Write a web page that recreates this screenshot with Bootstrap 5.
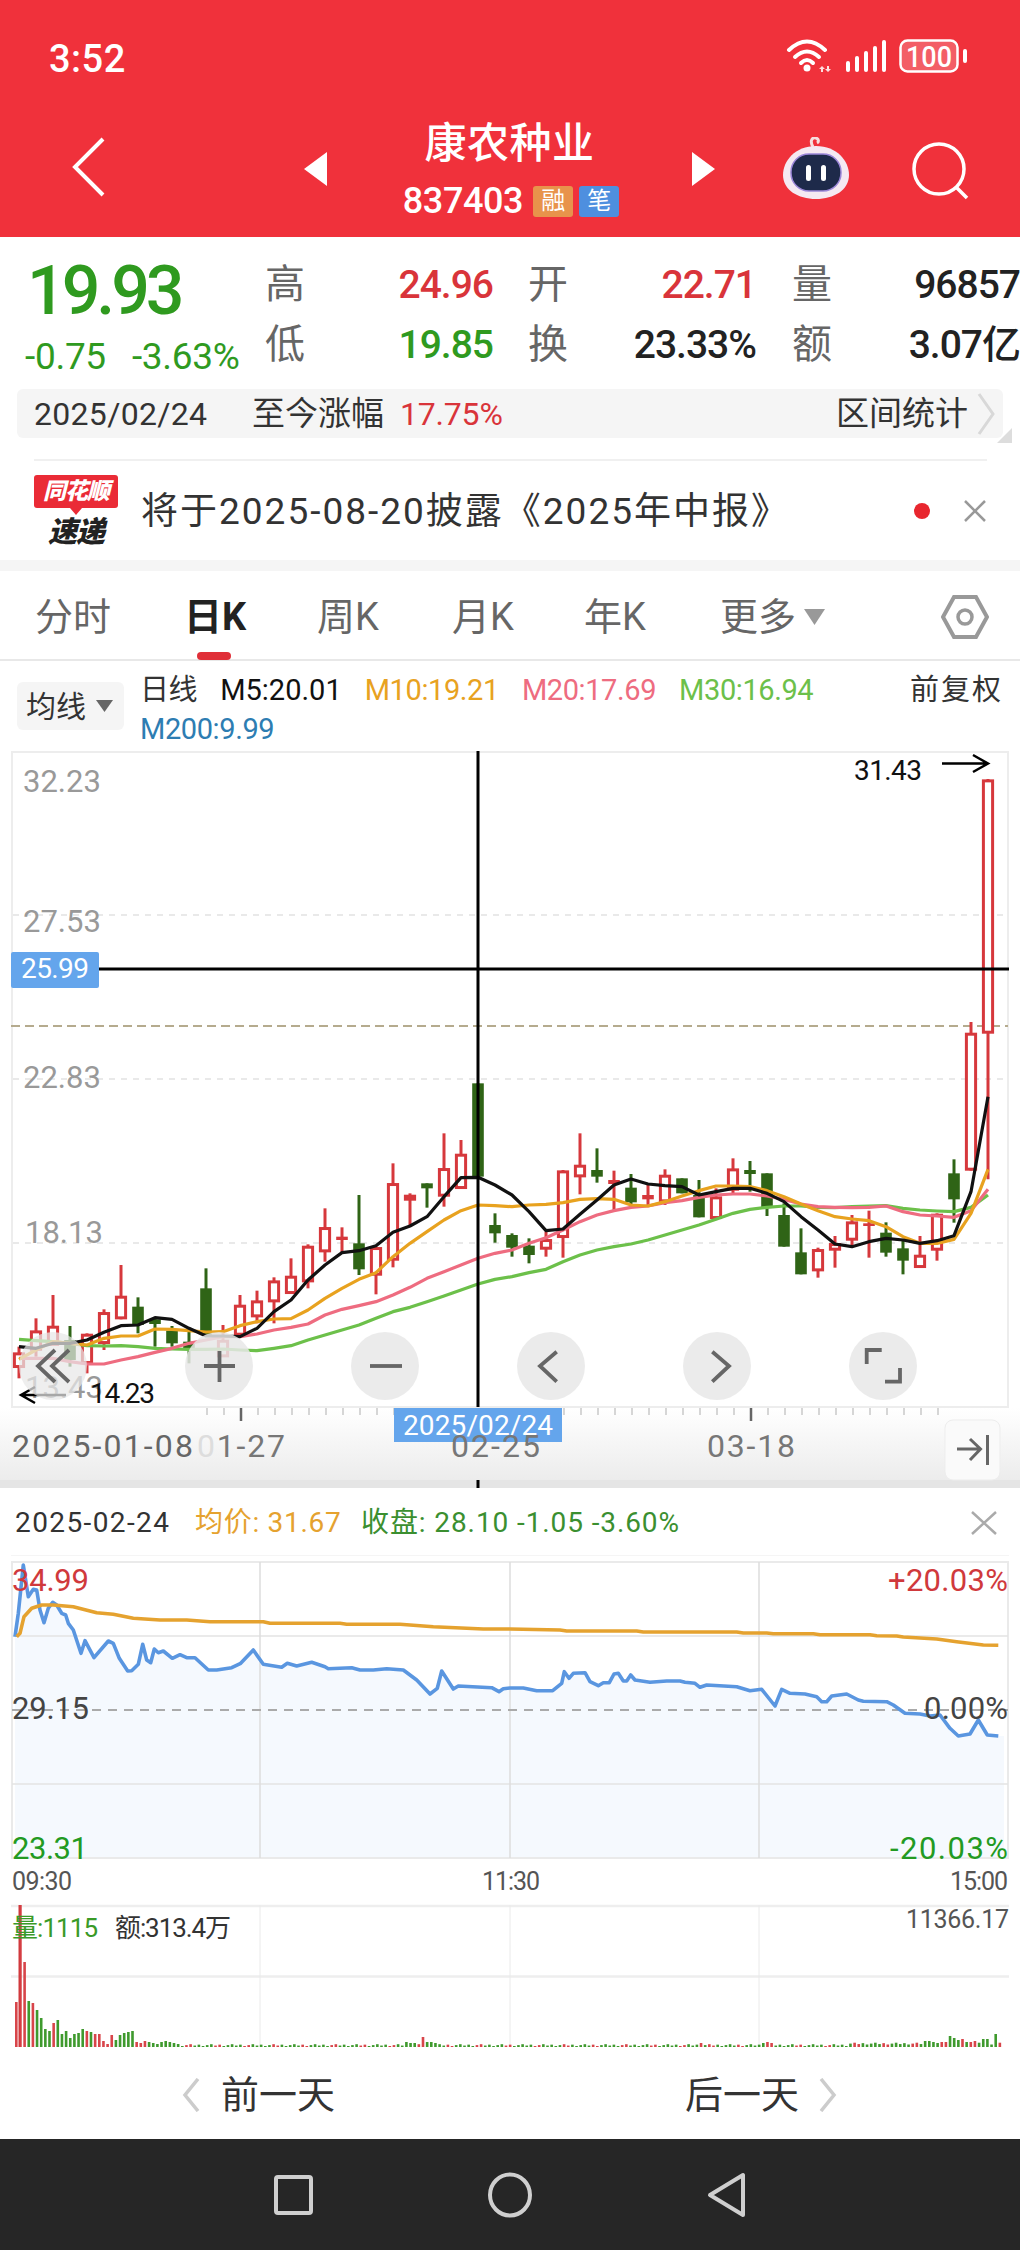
<!DOCTYPE html>
<html lang="zh">
<head>
<meta charset="utf-8">
<title>康农种业</title>
<link href="https://cdn.jsdelivr.net/npm/bootstrap@5.3.0/dist/css/bootstrap.min.css" rel="stylesheet">
<style>
html,body{margin:0;background:#fff}
body{width:1020px;height:2250px;overflow:hidden;font-family:Roboto,"Noto Sans CJK SC",sans-serif;color:#333}
svg{display:block}
svg text{font-family:Roboto,"Noto Sans CJK SC",sans-serif}
.app-head{height:237px;background:#F0313B;color:#fff}
.stat-row{height:117px;padding:37px 52px 0 49px}
.stat-time{font-size:38px;line-height:44px;letter-spacing:.5px;font-weight:500}
.nav-row{height:120px}
.nav-back{width:33px;margin-left:72px;margin-top:20px}
.tri-l{margin-left:199px;margin-top:35px}
.nav-mid{width:365px;text-align:center}
.stk-name{font-size:42px;line-height:46px;font-weight:500;margin-top:4px;letter-spacing:.5px}
.stk-code{font-size:36px;line-height:40px;gap:6px;margin-top:14px;margin-left:3px;font-weight:500}
.stk-code>span:first-child{letter-spacing:-.4px}
.stk-tag{width:40px;height:31px;border-radius:3px;font-size:24px;line-height:30px;font-weight:400}
.tag-rong{background:#E8934B}
.tag-bi{background:#4E8FDF}
.tri-r{margin-top:35px}
.robot{margin-left:67px;margin-top:20px}
.srch{margin-left:62px;margin-top:25px}
.quote-grid{height:152px;display:grid;grid-template-columns:265px 40px 188px 35px 40px 188px 36px 40px 188px;grid-template-rows:60px 59px;padding-top:18px;align-items:center}
.px-left{grid-row:1 / span 2;padding-left:25px;padding-top:6px}
.px-big{font-size:68px;line-height:70px;font-weight:500;letter-spacing:-4px;color:#2F9A1F;margin-left:2px;margin-top:-3px}
.px-sub{font-size:37px;line-height:40px;letter-spacing:-.3px;color:#2F9A1F;margin-top:11px;gap:26px}
.q-lbl{font-size:40px;line-height:46px;color:#666}
.q-val{font-size:39px;line-height:46px;letter-spacing:-1px;text-align:right;color:#222;font-weight:500}
.c-up{color:#D9343A}
.c-dn{color:#2F9A1F}
.date-bar{height:49px;margin:0 17px;background:#F5F5F5;border-radius:6px;padding:0 7px 0 17px;position:relative}
.date-bar::after{content:"";position:absolute;right:-9px;bottom:-5px;border-style:solid;border-width:0 0 15px 15px;border-color:transparent transparent #ddd transparent}
.db-date{font-size:32px;width:218px;letter-spacing:.3px}
.db-cap{font-size:33px;width:148px;white-space:nowrap}
.db-pct{font-size:32px;letter-spacing:-.2px}
.db-more{font-size:33px;color:#333}
.news-wrap{margin-top:21px;height:101px;margin-left:34px;margin-right:33px;border-top:2px solid #F0F0F0}
.logo-box{width:84px;margin-top:14px}
.logo-top{background:#EA2B36;color:#fff;font-size:23px;line-height:33px;height:33px;font-weight:900;font-style:italic;text-align:center;border-radius:3px;letter-spacing:-1px;position:relative}
.logo-top::after{content:"";position:absolute;left:36px;top:33px;border-style:solid;border-width:7px 6px 0 6px;border-color:#EA2B36 transparent transparent transparent}
.logo-bot{font-size:29px;line-height:32px;margin-top:8px;font-weight:900;font-style:italic;color:#222;text-align:center;letter-spacing:-1px}
.news-txt{font-size:37px;letter-spacing:2px;margin-left:23px;color:#333;white-space:nowrap;line-height:100px;margin-top:1px}
.news-dot{width:16px;height:16px;border-radius:50%;background:#E8262E;margin-right:33px}
.band{height:11px;background:#F5F5F5}
.tab-bar{height:90px;border-bottom:2px solid #E8E8E8;padding-left:35px;padding-top:4px}
.tab-item{font-size:38px;color:#666;line-height:44px;white-space:nowrap;position:relative}
.tab-item.on{font-weight:700;color:#222}
.tab-item.on::after{content:"";position:absolute;left:13px;bottom:-21px;width:34px;height:8px;border-radius:4px;background:#E02F38}
.t1{width:149px}.t2{width:133px}.t3{width:135px}.t4{width:132px}.t5{width:136px}.t6{width:221px}
.ma-row{height:84px}
.ma-btn{width:107px;height:48px;margin:21px 0 0 17px;background:#F5F5F5;border-radius:6px;font-size:30px;gap:10px;padding-left:9px;color:#333}
.ma-legend{width:720px;margin-left:16px;padding-top:10px;column-gap:23px;font-size:29px;line-height:39px}
.ma-legend span{white-space:nowrap;letter-spacing:-.4px}
.ma-legend .m5{letter-spacing:0}
.m5{color:#111}.m10{color:#E8A21F}.m20{color:#EE6C80}.m30{color:#6CC04A}.m200{color:#2D7DB2}
.ma-fq{font-size:29px;line-height:39px;margin-left:auto;margin-right:17px;margin-top:10px;letter-spacing:2px}
.day-head{height:67px;padding:2px 23px 0 15px;font-size:28px;letter-spacing:.7px}
.dh-date{width:180px;color:#333;letter-spacing:1.4px}
.dh-avg{width:166px;color:#E5A22F;white-space:nowrap}
.dh-close{color:#3B8F30;white-space:nowrap;letter-spacing:.9px}
.day-foot{height:92px;padding-top:4px}
.df-l{margin-left:182px;gap:21px}
.df-r{margin-left:auto;margin-right:183px;gap:20px}
.df-txt{font-size:38px;color:#333;line-height:42px}
.sys-nav{height:111px;background:#262626}
</style>
</head>
<body>
<header class="app-head">
  <div class="stat-row d-flex justify-content-between align-items-start">
    <div class="stat-time">3:52</div>
    <svg width="182" height="40" viewBox="787 40 182 40">
      <g fill="none" stroke="#fff" stroke-width="4" stroke-linecap="round">
        <path d="M790 53Q808 36 826 53"/><path d="M796 60Q808 49 820 60"/><path d="M802 66Q808 60 814 66"/>
      </g>
      <circle cx="808" cy="71" r="3.5" fill="#fff"/>
      <g fill="#fff">
        <path d="M823 69l-3 3h2v3h2v-3h2z M829 75l3-3h-2v-3h-2v3h-2z" opacity=".85"/>
        <rect x="847" y="64" width="4" height="11" rx="2"/><rect x="856" y="59" width="4" height="16" rx="2"/><rect x="865" y="54" width="4" height="21" rx="2"/><rect x="874" y="49" width="4" height="26" rx="2"/><rect x="883" y="43" width="4" height="32" rx="2"/>
      </g>
      <rect x="901.5" y="43.5" width="57" height="31" rx="7" fill="#fff" fill-opacity=".22" stroke="#fff" stroke-width="2.5"/>
      <text x="930" y="70" font-size="29" font-weight="500" fill="#fff" text-anchor="middle" textLength="46" lengthAdjust="spacingAndGlyphs">100</text>
      <rect x="964" y="52" width="4" height="14" rx="2" fill="#fff"/>
    </svg>
  </div>
  <div class="nav-row d-flex align-items-start">
    <svg class="nav-back" width="33" height="60" viewBox="0 0 33 60"><path d="M31 2L3 30l28 28" fill="none" stroke="#fff" stroke-width="4"/></svg>
    <svg class="tri-l" width="23" height="34" viewBox="0 0 23 34"><path d="M23 0L0 17l23 17z" fill="#fff"/></svg>
    <div class="nav-mid">
      <div class="stk-name">康农种业</div>
      <div class="stk-code d-flex justify-content-center align-items-center">
        <span>837403</span>
        <span class="stk-tag tag-rong ms-1">融</span><span class="stk-tag tag-bi">笔</span>
      </div>
    </div>
    <svg class="tri-r" width="23" height="34" viewBox="0 0 23 34"><path d="M0 0l23 17L0 34z" fill="#fff"/></svg>
    <svg class="robot" width="68" height="62" viewBox="0 0 68 62">
      <path d="M31 10C27 3 31 0 34 1s3 4 1 5" fill="none" stroke="#f6dede" stroke-width="3"/>
      <path d="M34 9C55 9 67 24 67 38C67 53 52 62 34 62S1 53 1 38C1 24 13 9 34 9Z" fill="#F5E9F2"/>
      <rect x="9" y="17" width="50" height="37" rx="18" fill="#1E2A4A" stroke="#9B86D8" stroke-width="1.5"/>
      <rect x="24" y="28" width="5" height="16" rx="2.500" fill="#fff"/><rect x="39" y="28" width="5" height="16" rx="2.500" fill="#fff"/>
    </svg>
    <svg class="srch" width="58" height="58" viewBox="0 0 58 58"><ellipse cx="27" cy="27" rx="25" ry="25" fill="none" stroke="#fff" stroke-width="3.5"/><path d="M44 45l11 11" stroke="#fff" stroke-width="3.5"/></svg>
  </div>
</header>

<section class="quote-grid">
  <div class="px-left">
    <div class="px-big">19.93</div>
    <div class="px-sub d-flex"><span>-0.75</span><span>-3.63%</span></div>
  </div>
  <div class="q-lbl">高</div><div class="q-val c-up">24.96</div><div></div>
  <div class="q-lbl">开</div><div class="q-val c-up">22.71</div><div></div>
  <div class="q-lbl">量</div><div class="q-val">96857</div>
  <div class="q-lbl">低</div><div class="q-val c-dn">19.85</div><div></div>
  <div class="q-lbl">换</div><div class="q-val">23.33%</div><div></div>
  <div class="q-lbl">额</div><div class="q-val">3.07亿</div>
</section>

<div class="date-bar d-flex align-items-center">
  <span class="db-date">2025/02/24</span>
  <span class="db-cap">至今涨幅</span>
  <span class="db-pct c-up">17.75%</span>
  <span class="db-more ms-auto me-2">区间统计</span>
  <svg width="20" height="46" viewBox="0 0 20 46"><path d="M3 3l14 20L3 43" fill="none" stroke="#D8D8D8" stroke-width="3"/></svg>
</div>

<div class="news-wrap d-flex align-items-start">
  <div class="logo-box">
    <div class="logo-top">同花顺</div>
    <div class="logo-bot">速递</div>
  </div>
  <div class="news-txt">将于2025-08-20披露《2025年中报》</div>
  <div class="ms-auto d-flex align-items-center h-100">
    <div class="news-dot"></div>
    <svg width="24" height="22" viewBox="0 0 24 22"><path d="M2 1l20 20M22 1L2 21" stroke="#999" stroke-width="2.5"/></svg>
  </div>
</div>
<div class="band"></div>

<nav class="tab-bar d-flex align-items-center">
  <div class="tab-item t1">分时</div>
  <div class="tab-item t2 on"><span>日K</span></div>
  <div class="tab-item t3">周K</div>
  <div class="tab-item t4">月K</div>
  <div class="tab-item t5">年K</div>
  <div class="tab-item t6 d-flex align-items-center gap-2">更多
    <svg width="21" height="16" viewBox="0 0 21 16"><path d="M0 0h21L10.500 16z" fill="#999"/></svg>
  </div>
  <svg width="48" height="46" viewBox="0 0 48 46"><path d="M2 23L13 3h22l11 20-11 20H13z" fill="none" stroke="#999" stroke-width="4"/><circle cx="24" cy="23" r="7" fill="none" stroke="#999" stroke-width="3.500"/></svg>
</nav>

<div class="ma-row d-flex align-items-start">
  <div class="ma-btn d-flex align-items-center">均线
    <svg width="17" height="12" viewBox="0 0 17 12"><path d="M0 0h17L8.500 12z" fill="#666"/></svg>
  </div>
  <div class="ma-legend d-flex flex-wrap">
    <span>日线</span><span class="m5">M5:20.01</span><span class="m10">M10:19.21</span><span class="m20">M20:17.69</span><span class="m30">M30:16.94</span><span class="m200">M200:9.99</span>
  </div>
  <div class="ma-fq">前复权</div>
</div>

<svg id="kchart" width="1020" height="743" viewBox="0 745 1020 743">
  <defs><linearGradient id="fade" x1="0" y1="0" x2="0" y2="1"><stop offset="0" stop-color="#fff"/><stop offset="1" stop-color="#ECECEC"/></linearGradient></defs>
  <rect x="0" y="1408" width="1020" height="72" fill="url(#fade)"/>
  <rect x="0" y="1480" width="1020" height="8" fill="#E5E5E5"/>
  <rect x="12" y="752" width="996" height="655" fill="#fff" stroke="#EDEDED" stroke-width="2"/>
  <g stroke="#E2E2E2" stroke-width="1.500" stroke-dasharray="6 6"><path d="M13 915H1007M13 1079H1007M13 1243H1007"/></g>
  <g fill="#999" font-size="31">
    <text x="23" y="792">32.23</text><text x="23" y="932">27.53</text><text x="23" y="1088">22.83</text><text x="25" y="1243">18.13</text><text x="25" y="1398">13.43</text>
  </g>
  <path d="M11 1026H1008" stroke="#B5AB8E" stroke-width="2" stroke-dasharray="9 5"/>
  <g id="ticks"></g>
  <g id="candles"></g>
  <g id="mas" fill="none" stroke-width="3.200" stroke-linejoin="round"></g>
  <path d="M478 751V1407M478 1480V1488" stroke="#000" stroke-width="3"/>
  <path d="M99 969H1009" stroke="#000" stroke-width="3"/>
  <rect x="11" y="952" width="88" height="36" rx="2" fill="#64A5EC"/>
  <text x="21" y="978" fill="#fff" font-size="28" textLength="68">25.99</text>
  <text x="854" y="780" fill="#111" font-size="28" textLength="68">31.43</text>
  <path d="M942 763.500H988M973 755l15 8.500-15 8.500" fill="none" stroke="#000" stroke-width="2.500"/>
  <text x="90" y="1403" fill="#111" font-size="28" textLength="65">14.23</text>
  <path d="M66 1395H21M35 1387l-14 8 14 8" fill="none" stroke="#000" stroke-width="2.500"/>
  <circle cx="53" cy="1366" r="34" fill="#E8E8E8" fill-opacity=".72"/>
  <g fill="#E8E8E8" fill-opacity=".85">
    <circle cx="219" cy="1366" r="34"/><circle cx="385" cy="1366" r="34"/><circle cx="551" cy="1366" r="34"/><circle cx="717" cy="1366" r="34"/><circle cx="883" cy="1366" r="34"/>
  </g>
  <g fill="none" stroke="#666" stroke-width="3.800">
    <path d="M55 1350l-17 16 17 16M69 1350l-17 16 17 16"/>
    <path d="M204 1366h31M219.500 1351v31"/>
    <path d="M370 1366h32"/>
    <path d="M556.700 1351.700L540 1366l16.700 15.700"/>
    <path d="M712.300 1351.700L729 1366l-16.700 15.700"/>
    <path d="M866.700 1364v-14h15M885 1381.700h15V1368"/>
  </g>
  <rect x="394" y="1408" width="168" height="34" fill="#64A5EC"/>
  <text x="403" y="1435" fill="#fff" font-size="28" textLength="150">2025/02/24</text>
  <g font-size="32" fill="#777">
    <text x="12" y="1457" textLength="181" fill="#666">2025-01-08</text>
    <text x="197" y="1457" textLength="88"><tspan fill="#DDD">0</tspan>1-27</text>
    <text x="451" y="1457" textLength="89">02-25</text>
    <text x="707" y="1457" textLength="88">03-18</text>
  </g>
  <rect x="945" y="1420" width="55" height="60" rx="8" fill="#FAFAFA" stroke="#EDEDED"/>
  <path d="M957 1449h22M970 1439l10.500 10-10.500 11M987.500 1435v30" fill="none" stroke="#666" stroke-width="3"/>
</svg>

<div class="day-head d-flex align-items-center">
  <span class="dh-date">2025-02-24</span>
  <span class="dh-avg">均价: 31.67</span>
  <span class="dh-close">收盘: 28.10 -1.05 -3.60%</span>
  <svg class="ms-auto" width="26" height="24" viewBox="0 0 26 24"><path d="M1 1l24 22M25 1L1 23" stroke="#AAA" stroke-width="2.500"/></svg>
</div>

<svg id="day" width="1020" height="492" viewBox="0 1555 1020 492">
  <path d="M11 1555.500H1009" stroke="#F5F5F5"/>
  <path id="dayfill" fill="#F5F9FE"/>
  <rect x="12" y="1562" width="996" height="296" fill="none" stroke="#EAEAEA" stroke-width="2"/>
  <path d="M12 1636H1008M12 1784H1008" stroke="#E4E4E4" stroke-width="1.500"/>
  <path d="M260 1562V1858M510 1562V1858M759 1562V1858" stroke="#DDD" stroke-width="1.500"/>
  <path d="M12 1710H1008" stroke="#AAA" stroke-width="2" stroke-dasharray="9 7"/>
  <polyline id="dayline" fill="none" stroke="#5A96E0" stroke-width="3.600" stroke-linejoin="round"/>
  <polyline id="dayavg" fill="none" stroke="#E5A22F" stroke-width="3.600" stroke-linejoin="round"/>
  <g font-size="31">
    <text x="12" y="1591" fill="#D0393C" textLength="77">34.99</text>
    <text x="12" y="1719" fill="#444" textLength="77">29.15</text>
    <text x="12" y="1859" fill="#229A22" textLength="76">23.31</text>
    <text x="888" y="1591" fill="#D0393C" textLength="120">+20.03%</text>
    <text x="924" y="1719" fill="#444" textLength="84">0.00%</text>
    <text x="890" y="1859" fill="#229A22" textLength="118">-20.03%</text>
  </g>
  <g font-size="25" fill="#555">
    <text x="12" y="1890" textLength="60">09:30</text>
    <text x="482" y="1890" textLength="58">11:30</text>
    <text x="950" y="1890" textLength="58">15:00</text>
  </g>
  <path d="M11 1906H1009M11 1976.500H1009" stroke="#EEE" stroke-width="2.500"/>
  <path d="M260 1905V2047M510 1905V2047M759 1905V2047" stroke="#EAEAEA"/>
  <g id="vols"></g>
  <path d="M19.500 1905V2047" stroke="#D0393C" stroke-width="2"/>
  <text x="12" y="1937" font-size="26" fill="#3A9A28" textLength="86">量:1115</text>
  <text x="115" y="1937" font-size="26" fill="#333" textLength="116">额:313.4万</text>
  <text x="906" y="1928" font-size="25" fill="#555" textLength="103">11366.17</text>
</svg>

<footer class="day-foot d-flex align-items-center">
  <div class="df-l d-flex align-items-center">
    <svg width="18" height="34" viewBox="0 0 18 34"><path d="M16 1L3 17l13 16" fill="none" stroke="#CCC" stroke-width="3.500"/></svg>
    <span class="df-txt">前一天</span>
  </div>
  <div class="df-r d-flex align-items-center">
    <span class="df-txt">后一天</span>
    <svg width="18" height="34" viewBox="0 0 18 34"><path d="M2 1l13 16L2 33" fill="none" stroke="#CCC" stroke-width="3.500"/></svg>
  </div>
</footer>

<div class="sys-nav d-flex align-items-center justify-content-center">
  <svg width="480" height="50" viewBox="270 2170 480 50" fill="none" stroke="#CFCFCF" stroke-width="4" stroke-linejoin="round">
    <rect x="276" y="2177" width="35" height="36" rx="2"/>
    <ellipse cx="510" cy="2195" rx="20" ry="20.500"/>
    <path d="M743 2175v40l-33-20z"/>
  </svg>
</div>

<script>
(function(){
  var NS='http://www.w3.org/2000/svg';
  function el(p,n,a){var e=document.createElementNS(NS,n);for(var k in a)e.setAttribute(k,a[k]);p.appendChild(e);return e;}
  var R='#D6383C',G='#2F6416',X0=19;
  var c=[['r',800,895,818,862],['r',715,830,752,810],['r',645,790,738,795],['g',738,860,780,840],['r',760,880,762,850],['r',688,810,697,790],['r',555,718,648,716],['g',652,760,680,735],['g',715,800,718,732],['g',738,800,752,790],['g',755,850,785,805],['g',565,770,625,765],['r',735,830,780,830],['r',645,770,675,765],['r',632,730,662,710],['r',592,730,602,665],['r',535,640,588,640],['r',493,625,498,605],['r',385,545,442,515],['R',442,520,470,480],['g',345,585,490,568],['r',500,643,502,585],['r',250,562,310,540],['r',340,440,345,360],['g',310,383,310,325],['r',160,380,265,348],['r',180,325,222,325],['g',10,295,10,290],['g',400,488,435,460],['g',460,530,465,503],['g',475,550,497,525],['r',455,530,478,507],['r',270,533,272,472],['r',160,343,255,290],['g',205,308,270,290],['R',272,390,300,312],['g',282,372,323,367],['R',315,378,345,358],['r',268,375,285,365],['g',295,340,295,340],['g',300,412,345,412],['r',325,417,350,415],['r',235,340,266,330],['g',243,335,270,282],['g',280,408,280,382],['g',370,500,405,500],['g',445,583,517,583],['r',503,593,508,572],['r',468,563,490,510],['r',405,495,425,480],['R',392,533,430,438],['g',427,530,458,518],['g',480,583,505,542],['r',468,562,525,562],['r',400,542,402,510],['g',238,428,280,358],['r',-174,272,-141,270],['r',-903,298,-901,-141]];
  var cg=document.getElementById('candles');
  c.forEach(function(d,i){
    var x=X0+17*i,y=function(v){return 1080+v/3;},col=d[0]==='g'?G:R;
    el(cg,'line',{x1:x,x2:x,y1:y(d[1]),y2:y(d[2]),stroke:col,'stroke-width':3});
    if(d[0]==='r')el(cg,'rect',{x:x-4.6,y:y(d[3])+1.2,width:9.2,height:y(d[4])-y(d[3])-2,fill:'#fff',stroke:col,'stroke-width':3});
    else el(cg,'rect',{x:x-5.8,y:y(d[3]),width:11.6,height:y(d[4])-y(d[3]),fill:col});
  });
  var ma={
   '#111':[800,805,790,790,780,757,737,735,713,718,745,768,768,770,745,695,660,600,555,518,512,497,457,438,410,350,293,292,315,345,395,452,447,403,360,315,297,312,317,320,345,335,325,325,340,365,410,450,492,500,485,475,480,490,482,467,335,50],
   '#E8A21F':[838,810,785,790,795,775,768,768,747,748,752,756,755,737,725,717,716,690,655,625,598,578,530,490,455,420,392,375,377,380,375,373,368,358,356,358,375,378,365,348,332,318,318,320,332,350,372,392,410,417,422,440,470,490,490,478,400,268],
   '#EE6C80':[835,835,835,845,852,852,840,830,817,805,790,780,770,770,762,750,742,732,705,688,677,665,645,622,595,575,555,535,520,510,490,473,450,425,405,392,382,378,368,362,352,345,342,342,348,358,372,380,382,383,382,378,395,405,408,412,392,328],
   '#6CC04A':[778,782,785,790,797,798,797,800,805,807,808,808,807,810,812,805,797,780,765,750,735,715,695,682,665,648,630,612,598,590,578,568,545,525,510,500,492,480,465,450,435,418,400,388,382,378,378,382,383,380,378,377,385,390,393,395,382,345]
  };
  var mg=document.getElementById('mas');
  ['#6CC04A','#EE6C80','#E8A21F','#111'].forEach(function(k){
    el(mg,'polyline',{stroke:k,points:ma[k].map(function(v,i){return (X0+17*i)+','+(1080+v/3);}).join(' ')});
  });
  var tg=document.getElementById('ticks');
  for(var x=207;x<=938;x+=17){
    var major=(x===241||x===751||x===496);
    el(tg,'line',{x1:x,x2:x,y1:1408,y2:major?1421:1415,stroke:major?'#666':'#CCC','stroke-width':major?2.5:1.6});
  }
  var L=[45,470,55,400,70,255,85,350,100,328,110,330,120,390,132,428,145,385,158,367,170,375,185,400,197,405,205,430,220,450,243,520,255,482,282,533,325,483,340,490,358,535,383,573,395,572,415,553,428,493,440,540,452,548,463,507,475,518,490,513,517,535,540,524,560,533,585,533,625,570,650,570,695,563,722,550,760,510,790,553,845,562,862,550,890,558,935,547,975,560,985,566,1055,563,1080,570,1120,570,1160,566,1210,570,1250,600,1290,642,1312,625,1325,573,1360,627,1375,618,1475,623,1497,635,1510,626];
  var Rr=[0,624,40,624,80,632,128,632,155,610,163,575,177,595,190,580,225,578,240,605,265,617,280,608,298,608,312,582,325,580,340,603,350,603,362,585,375,600,420,607,470,603,510,603,525,607,555,610,570,622,590,615,680,620,720,632,755,628,795,678,815,628,840,640,885,642,920,650,935,665,950,665,965,648,1010,642,1045,660,1060,664,1130,665,1150,675,1185,700,1230,702,1260,708,1290,705,1320,745,1345,768,1380,762,1405,720,1432,765,1465,768];
  var A=[50,470,60,460,72,410,95,385,125,375,160,375,220,380,290,398,340,403,400,415,480,420,560,420,630,425,790,425,810,430,1020,430,1040,433,1200,433,1300,440,1450,447];
  var Ar=[0,447,150,450,170,453,380,453,400,456,680,456,700,459,770,459,790,461,910,461,930,464,1080,464,1100,467,1160,468,1180,471,1280,477,1340,485,1420,495,1465,496];
  function pts(a,off){var o=[];for(var i=0;i<a.length;i+=2)o.push((off+a[i]/3).toFixed(1)+','+(1480+a[i+1]/3).toFixed(1));return o;}
  var pl=pts(L,0).concat(pts(Rr,510)),pa=pts(A,0).concat(pts(Ar,510));
  document.getElementById('dayline').setAttribute('points',pl.join(' '));
  document.getElementById('dayavg').setAttribute('points',pa.join(' '));
  document.getElementById('dayfill').setAttribute('d','M15,1858L'+pl.join('L')+'L1004,1736L1004,1858Z');
  var hs=[45,142,85,46,44,37,29,18,16,24,27,13,16,9,13,14,18,16,15,13,13,6,3,12,7,12,14,15,16,5,4,6,5,4,3,5,6,5,4,3];
  var cs='rrrgrggggrgggggggrgrrrrrgggggrrrgggggg';
  var big={94:5,95:4,96:4,98:10,99:5,100:5,101:4,165:4,180:4,181:5,182:4,219:6,220:6,221:5,222:4,223:5,224:5,225:11,226:9,227:7,228:8,229:5,230:5,231:6,233:8,234:8,236:13};
  var vg=document.getElementById('vols');
  for(var j=0;j<238;j++){
    var h=j<hs.length?hs[j]:(big[j]||(1+(j*7%5)*0.45+(j>200?1.5:0)));
    var up=j<cs.length?cs[j]==='r':((j*13)%7<2||j===165||j===228);
    el(vg,'rect',{x:(15+j*4.15).toFixed(2),y:2047-h,width:2.6,height:h,fill:up?'#D8454A':'#3F9A2E'});
  }
})();
</script>
<script src="https://cdn.jsdelivr.net/npm/bootstrap@5.3.0/dist/js/bootstrap.bundle.min.js"></script>
</body>
</html>
